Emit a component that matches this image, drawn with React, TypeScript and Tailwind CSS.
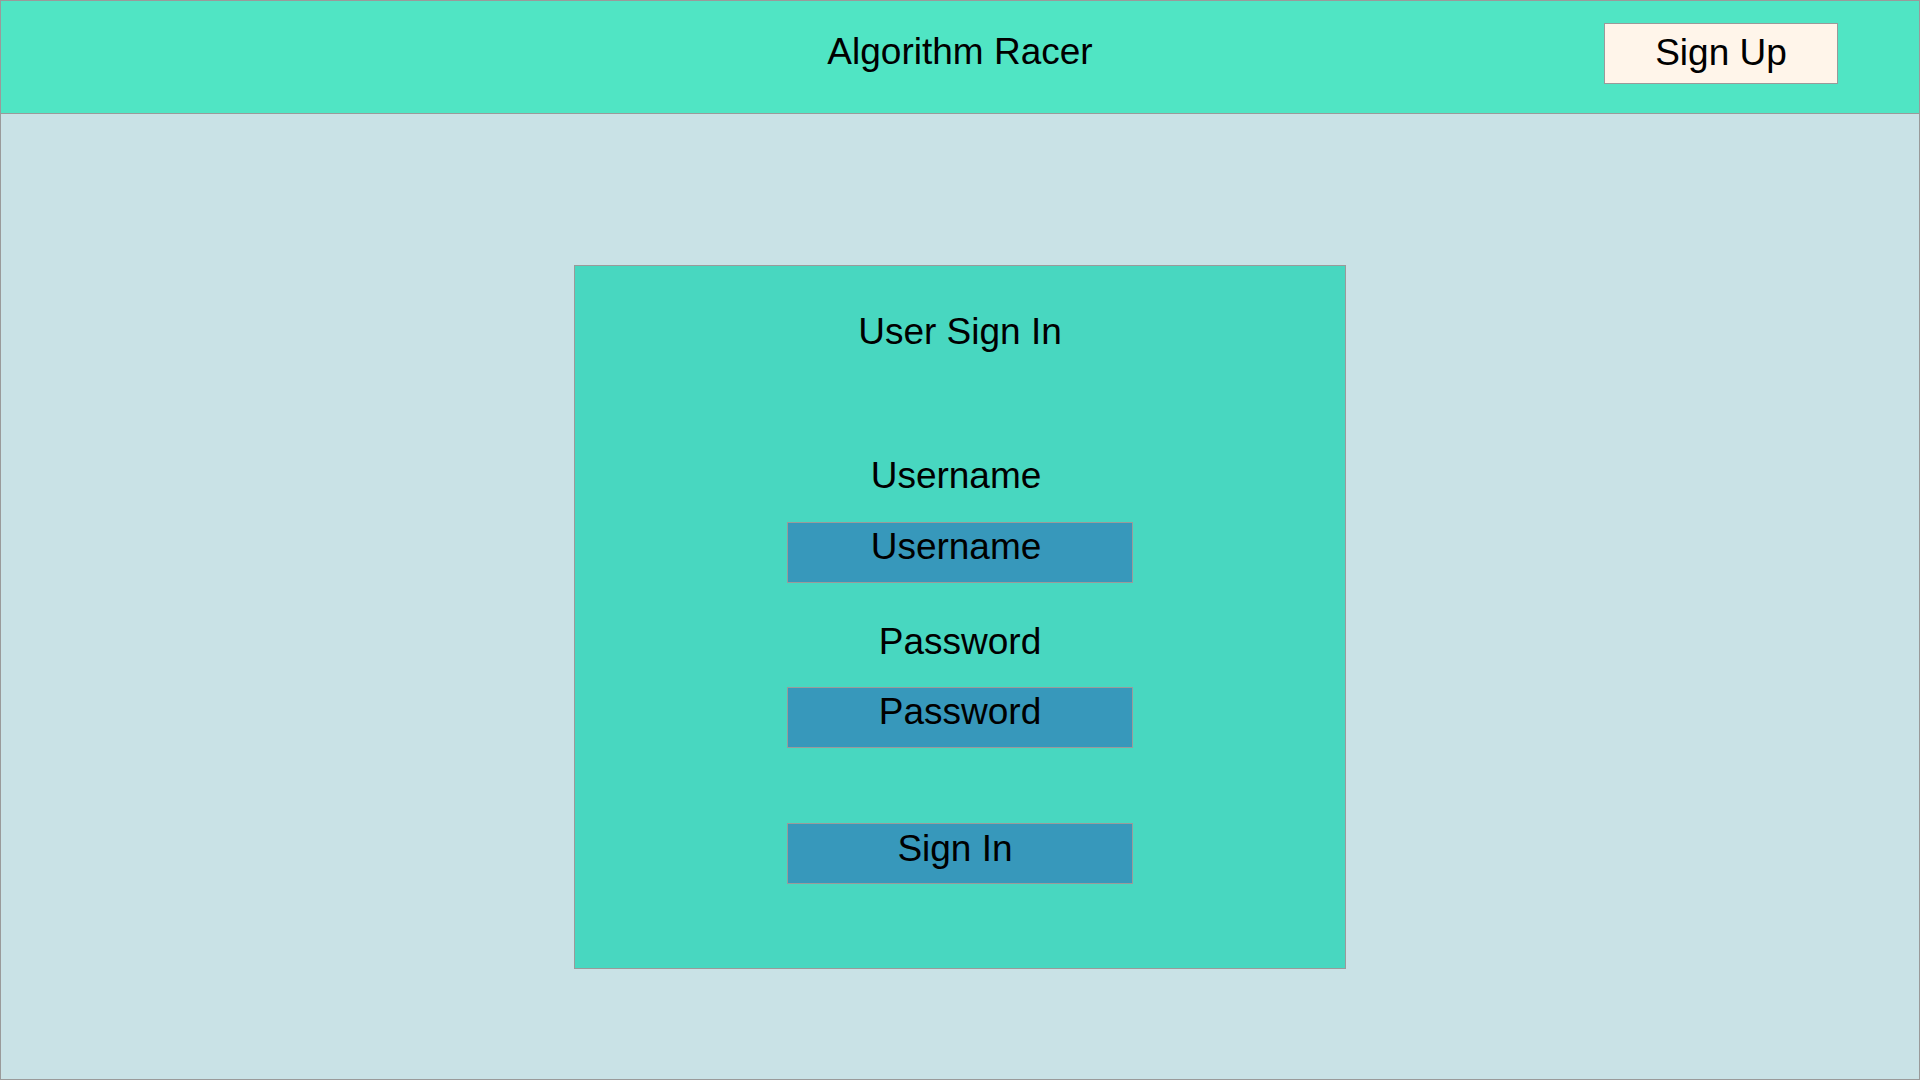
export default function App() {
  return (
    <div
      className="w-full h-[1080px] flex flex-col border border-[#9a9a9a] bg-[#c9e2e6] text-black"
      style={{ fontFamily: '"Liberation Sans", Arial, sans-serif' }}
    >
      {/* top bar */}
      <header className="h-[113px] shrink-0 grid grid-cols-[1fr_auto_1fr] bg-[#50e5c4] border-b border-[#9a9a9a]">
        <div />
        <h1 className="mt-[30px] text-[37px] leading-[41px] font-normal">Algorithm Racer</h1>
        <div className="flex justify-end pr-[81px]">
          <button className="mt-[22px] w-[234px] h-[61px] pt-[8px] flex justify-center items-start bg-[#fff5ea] border border-[#9a9a9a] text-[37px] leading-[41px]">
            Sign Up
          </button>
        </div>
      </header>

      {/* sign in card */}
      <main className="flex-1 flex justify-center">
        <div className="mt-[151px] w-[772px] h-[704px] flex flex-col items-center bg-[#48d7c0] border border-[#9a9a9a]">
          <h2 className="mt-[45px] text-[37px] leading-[41px] font-normal">User Sign In</h2>

          <label className="mt-[103px] pr-[8px] text-[37px] leading-[41px]">Username</label>
          <input
            className="mt-[26px] w-[346px] h-[61px] pt-[3px] pb-[15px] pr-[8px] text-center bg-[#3798bb] border border-[#9a9a9a] text-[37px] leading-[41px] placeholder:text-black outline-none"
            placeholder="Username"
          />

          <label className="mt-[38px] text-[37px] leading-[41px]">Password</label>
          <input
            type="password"
            className="mt-[25px] w-[346px] h-[61px] pt-[3px] pb-[15px] text-center bg-[#3798bb] border border-[#9a9a9a] text-[37px] leading-[41px] placeholder:text-black outline-none"
            placeholder="Password"
          />

          <button className="mt-[75px] w-[346px] h-[61px] pt-[4px] pr-[10px] flex justify-center items-start bg-[#3798bb] border border-[#9a9a9a] text-[37px] leading-[41px]">
            Sign In
          </button>
        </div>
      </main>
    </div>
  );
}
